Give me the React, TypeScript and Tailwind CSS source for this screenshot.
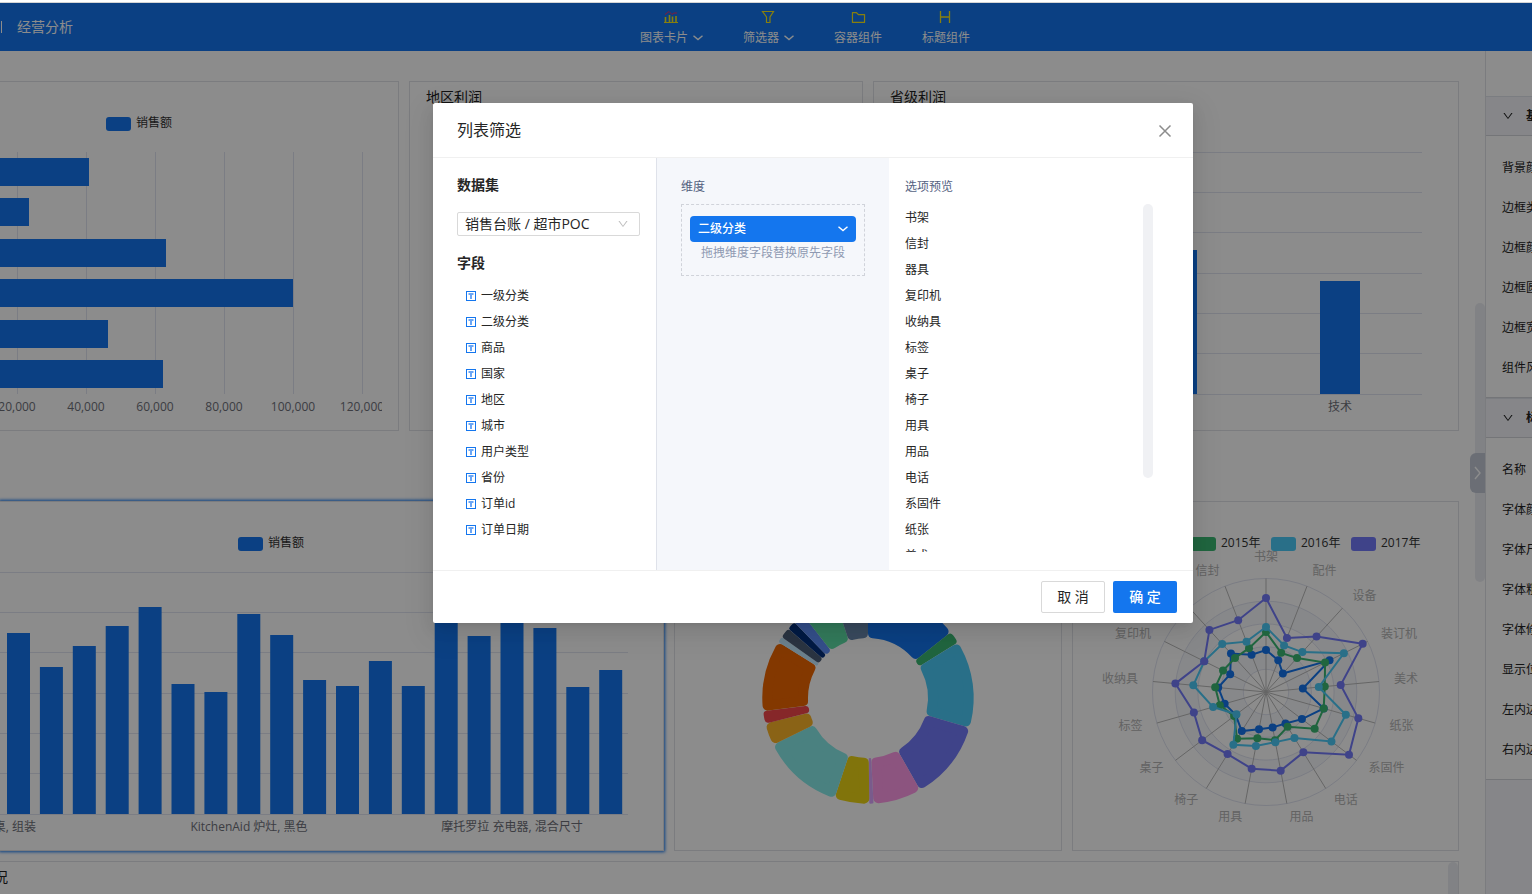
import { useState } from 'react'
import type { ReactNode } from 'react'
import clsx from 'clsx'
import { AiOutlineDown, AiOutlineFolder } from 'react-icons/ai'

const BLUE = '#1476ee'
const GRID = '#e0e3f0'

const fields = ['一级分类', '二级分类', '商品', '国家', '地区', '城市', '用户类型', '省份', '订单id', '订单日期']

const options = [
  '书架', '信封', '器具', '复印机', '收纳具', '标签', '桌子', '椅子', '用具',
  '用品', '电话', '系固件', '纸张', '美术', '装订机', '设备', '配件',
]

const sections = [
  { title: '基础', items: ['背景颜色', '边框类型', '边框颜色', '边框圆角', '边框宽度', '组件风格'] },
  { title: '标题', items: ['名称', '字体颜色', '字体尺寸', '字体粗细', '字体修饰', '显示位置', '左内边距', '右内边距'] },
]

const radarAxes = [
  '书架', '配件', '设备', '装订机', '美术', '纸张', '系固件', '电话', '用品',
  '用具', '椅子', '桌子', '标签', '收纳具', '复印机', '器具', '信封',
]

const radarSeries = [
  { name: '2014年', color: BLUE, values: [42, 34, 25, 71, 37, 60, 45, 37, 36, 38, 46, 38, 43, 48, 40, 52, 40] },
  { name: '2015年', color: '#3bb873', values: [60, 42, 46, 66, 59, 60, 61, 41, 49, 47, 55, 40, 48, 51, 48, 46, 47] },
  { name: '2016年', color: '#4bcbf8', values: [65, 50, 54, 87, 53, 83, 82, 54, 51, 55, 62, 37, 55, 73, 69, 65, 54] },
  { name: '2017年', color: '#747afa', values: [94, 58, 75, 108, 75, 96, 104, 71, 80, 78, 73, 80, 75, 91, 69, 84, 77] },
]

// end = closing angle of the slice in degrees, clockwise from the top
const slices = [
  { end: 51.5, color: BLUE },
  { end: 58.3, color: '#3bb873' },
  { end: 106.3, color: '#4bcbf8' },
  { end: 150.5, color: '#747afa' },
  { end: 177, color: '#ff99e7' },
  { end: 179.3, color: '#dca7ff' },
  { end: 198.5, color: '#ecd314' },
  { end: 243.7, color: '#87ebe9' },
  { end: 256, color: '#fbb428' },
  { end: 262.8, color: '#f5474c' },
  { end: 302, color: '#ee6600' },
  { end: 305.2, color: '#c3e9ff' },
  { end: 311, color: '#4e5f78' },
  { end: 315.8, color: '#04317d' },
  { end: 322, color: '#5f91fb' },
  { end: 341.5, color: '#5ddea7' },
  { end: 360, color: '#6987ab' },
]

const salesByRegion = [
  { y: 76, w: 89 },
  { y: 116, w: 29 },
  { y: 157, w: 166 },
  { y: 197, w: 293 },
  { y: 238, w: 108 },
  { y: 278, w: 163 },
]

const productBars = [181, 147, 168, 188, 207, 130, 122, 200, 179, 134, 128, 153, 128, 214, 178, 214, 186, 127, 144]

function polar(cx: number, cy: number, r: number, rad: number): [number, number] {
  return [cx + r * Math.sin(rad), cy - r * Math.cos(rad)]
}

function Caret() {
  return (
    <svg width="10" height="6" viewBox="0 0 10 6" fill="none" stroke="currentColor" strokeWidth="1.4" aria-hidden="true">
      <path d="M0.5 0.8 L5 4.6 L9.5 0.8" />
    </svg>
  )
}

function ChartIcon() {
  return (
    <svg width="14" height="14" viewBox="0 0 14 14" fill="none" aria-hidden="true">
      <path d="M0 12.5H14" stroke="#f7e71a" />
      <path d="M1.5 7V12M5.5 5V12M8.5 6.5V12M12 6V12" stroke="#f7e71a" strokeWidth="1.6" />
      <path d="M1 4.5L5 1.5L8 4.5L10 3H13" stroke="#ee2f68" strokeWidth="1" />
    </svg>
  )
}

function FunnelIcon() {
  return (
    <svg width="14" height="14" viewBox="0 0 14 14" fill="none" stroke="#f7e71a" strokeWidth="1.2" aria-hidden="true">
      <path d="M1.5 1.5H12.5L9 7V12.5H5.5V7Z" />
    </svg>
  )
}

function HeadingIcon() {
  return (
    <svg width="14" height="14" viewBox="0 0 14 14" fill="none" stroke="#f7e71a" strokeWidth="1.3" aria-hidden="true">
      <path d="M1.5 1V13M10.5 1V13M1.5 7H10.5" />
    </svg>
  )
}

function CloseIcon() {
  return (
    <svg width="14" height="14" viewBox="0 0 14 14" fill="none" stroke="currentColor" strokeWidth="1.5" aria-hidden="true">
      <path d="M1.5 1.5L12.5 12.5M12.5 1.5L1.5 12.5" />
    </svg>
  )
}

function FieldIcon() {
  return (
    <svg width="10" height="10" viewBox="0 0 10 10" fill="none" aria-hidden="true">
      <rect x="0.5" y="0.5" width="9" height="9" stroke="#1476ee" />
      <path d="M2.5 3H7.5" stroke="#6ba6f5" strokeWidth="2" />
      <path d="M5 3V8" stroke="#6ba6f5" strokeWidth="2" />
    </svg>
  )
}

function Card({ title, className, children }: { title?: string; className?: string; children: ReactNode }) {
  return (
    <section className={clsx('relative h-[350px] border border-[#e1e2e8] bg-white', className)}>
      {title && <h3 className="absolute left-4 h-[30px] text-sm leading-[30px] text-[#222]">{title}</h3>}
      <div className="h-full overflow-hidden">{children}</div>
    </section>
  )
}

function Legend({ x, color, label }: { x: number; color: string; label: string }) {
  return (
    <g>
      <rect x={x} y="35" width="25" height="14" rx="3" fill={color} />
      <text x={x + 30} y="45" fill="#333">{label}</text>
    </g>
  )
}

function RegionSales() {
  return (
    <svg className="h-full w-[382px]" fontSize="12">
      <Legend x={106} color={BLUE} label="销售额" />
      {[17, 86, 155, 224, 293, 362].map((x, i) => (
        <g key={x}>
          <line x1={x + 0.5} x2={x + 0.5} y1="70" y2="312" stroke={GRID} />
          <text x={x} y="329" textAnchor="middle" fill="#6e7079">{`${(i + 1) * 20},000`}</text>
        </g>
      ))}
      {salesByRegion.map((b) => (
        <rect key={b.y} x="0" y={b.y} width={b.w} height="28" fill={BLUE} />
      ))}
    </svg>
  )
}

function ProvinceProfit() {
  return (
    <svg className="h-full w-full" fontSize="12">
      {[70, 110, 150, 191, 231, 271, 312].map((y) => (
        <line key={y} x1="60" x2="548" y1={y + 0.5} y2={y + 0.5} stroke={GRID} />
      ))}
      <rect x="283" y="168" width="40" height="144" fill={BLUE} />
      <rect x="446" y="199" width="40" height="113" fill={BLUE} />
      <text x="466" y="329" textAnchor="middle" fill="#6e7079">技术</text>
    </svg>
  )
}

function ProductSales() {
  return (
    <svg className="h-full w-full" fontSize="12">
      <Legend x={238} color={BLUE} label="销售额" />
      {[70, 110, 150, 191, 231, 271, 312].map((y) => (
        <line key={y} x1="0" x2="628" y1={y + 0.5} y2={y + 0.5} stroke={GRID} />
      ))}
      {productBars.map((h, i) => (
        <rect key={i} x={7 + i * 32.9} y={312 - h} width="23" height={h} fill={BLUE} />
      ))}
      <g fill="#6e7079">
        <text x="36" y="329" textAnchor="end">书桌, 组装</text>
        <text x="249" y="329" textAnchor="middle">KitchenAid 炉灶, 黑色</text>
        <text x="512" y="329" textAnchor="middle">摩托罗拉 充电器, 混合尺寸</text>
      </g>
    </svg>
  )
}

function CategoryRing() {
  const cx = 193
  const cy = 196
  const outer = 105.7
  const inner = 60
  return (
    <svg className="h-full w-full">
      {slices.map((s, i) => {
        const from = ((i ? slices[i - 1].end : 0) * Math.PI) / 180
        const to = (s.end * Math.PI) / 180
        // inset the sector and stroke it back out, which rounds its corners
        const c = Math.min(5, Math.sin((to - from) / 2) * inner)
        const ro = outer - c
        const ri = inner + c
        const ao = Math.min(Math.asin(c / ro), (to - from) / 2)
        const ai = Math.min(Math.asin(c / ri), (to - from) / 2)
        const d = [
          'M', ...polar(cx, cy, ro, from + ao),
          'A', ro, ro, 0, 0, 1, ...polar(cx, cy, ro, to - ao),
          'L', ...polar(cx, cy, ri, to - ai),
          'A', ri, ri, 0, 0, 0, ...polar(cx, cy, ri, from + ai),
          'Z',
        ].join(' ')
        return <path key={s.end} d={d} fill={s.color} stroke={s.color} strokeWidth={c * 2} strokeLinejoin="round" />
      })}
    </svg>
  )
}

function YearRadar() {
  const cx = 193
  const cy = 190
  const r = 113.5
  const step = (Math.PI * 2) / radarAxes.length
  return (
    <svg className="h-full w-full" fontSize="12">
      {[5, 4, 3, 2, 1].map((k) => (
        <circle key={k} cx={cx} cy={cy} r={(r * k) / 5} fill={k % 2 ? '#ffffff' : '#f6f8fc'} stroke={GRID} />
      ))}
      {radarAxes.map((name, i) => {
        const [x, y] = polar(cx, cy, r, i * step)
        const [lx, ly] = polar(cx, cy, r + 15, i * step)
        const anchor = i === 0 ? 'middle' : lx > cx ? 'start' : 'end'
        return (
          <g key={name}>
            <line x1={cx} y1={cy} x2={x} y2={y} stroke="#b9b9b9" />
            <text x={lx} y={i === 0 ? ly - 3 : ly + 3} textAnchor={anchor} fill="#b4b4b4">{name}</text>
          </g>
        )
      })}
      {radarSeries.map((s, n) => {
        const points = s.values.map((v, i) => polar(cx, cy, v, i * step))
        return (
          <g key={s.name} fill={s.color}>
            <polygon points={points.map((p) => p.join(',')).join(' ')} fill="none" stroke={s.color} strokeWidth="2" />
            {points.map(([x, y], i) => <circle key={i} cx={x} cy={y} r="4" />)}
            <Legend x={38 + n * 80} color={s.color} label={s.name} />
          </g>
        )
      })}
    </svg>
  )
}

function Header() {
  const tools = [
    { label: '图表卡片', icon: <ChartIcon />, menu: true },
    { label: '筛选器', icon: <FunnelIcon />, menu: true },
    { label: '容器组件', icon: <AiOutlineFolder size={17} />, menu: false },
    { label: '标题组件', icon: <HeadingIcon />, menu: false },
  ]
  return (
    <header className="flex h-12 shrink-0 items-center bg-[#1476ee] text-white">
      <div className="flex w-[78px] shrink-0 items-center gap-[15px]">
        <span className="ml-px h-3 w-px shrink-0 bg-white" />
        <h1 className="shrink-0 text-sm">经营分析</h1>
      </div>
      <nav className="flex flex-1 justify-center gap-10">
        {tools.map((t) => (
          <button key={t.label} type="button" className="flex flex-col items-center pt-1 text-xs">
            <span className="flex h-[18px] items-center text-[#f7e71a]">{t.icon}</span>
            <span className="flex h-6 items-center gap-[5px]">
              {t.label}
              {t.menu && <Caret />}
            </span>
          </button>
        ))}
      </nav>
    </header>
  )
}

function Canvas() {
  return (
    <main className="relative flex min-w-0 flex-1 flex-col overflow-hidden bg-white pt-[30px] pr-[26px]">
      <div className="grid shrink-0 grid-cols-[399fr_454fr_586fr] gap-[10px]">
        <Card className="border-l-0"><RegionSales /></Card>
        <Card title="地区利润"><svg className="h-full w-full" /></Card>
        <Card title="省级利润"><ProvinceProfit /></Card>
      </div>
      <div className="mt-[70px] grid shrink-0 grid-cols-[664fr_388fr_387fr] gap-[10px]">
        <Card className="border-l-0 shadow-[0_0_3px_1px_#1476ee]"><ProductSales /></Card>
        <Card><CategoryRing /></Card>
        <Card><YearRadar /></Card>
      </div>
      <section className="mt-[10px] flex h-[350px] shrink-0 justify-between border border-l-0 border-[#e1e2e8]">
        <h3 className="flex w-2 justify-end overflow-hidden text-sm leading-[30px] whitespace-nowrap text-[#222]">
          <span>销售情况</span>
        </h3>
        <span className="w-[10px] rounded-full bg-[#ecedf2]" />
      </section>
      {/* page scroll thumb and the panel toggle float over the canvas */}
      <span className="absolute top-[252px] right-0 h-[279px] w-[10px] rounded-full bg-[#ecedf2]" />
      <button
        type="button"
        aria-label="收起面板"
        className="absolute top-[402px] right-0 flex h-10 w-[15px] items-center justify-center rounded-l-md bg-[#c3c9d6] text-white"
      >
        <svg width="7" height="14" viewBox="0 0 7 14" fill="none" stroke="currentColor" strokeWidth="1.4" aria-hidden="true">
          <path d="M1 1L6 7L1 13" />
        </svg>
      </button>
    </main>
  )
}

function SettingsPanel() {
  return (
    <aside className="w-[47px] shrink-0 overflow-hidden border-l border-[#e1e2e8] bg-[#f4f5fa] text-xs whitespace-nowrap text-[#222]">
      <div className="h-[45px] bg-white" />
      {sections.map((s) => (
        <section key={s.title} className="border-b border-[#d4d5da] bg-white">
          <h2 className="flex h-10 items-center gap-3 border-y border-t-[#e1e4ec] border-b-[#d4d5da] bg-[#f4f5fa] pl-4 font-bold">
            <AiOutlineDown size={12} className="shrink-0" />
            {s.title}
          </h2>
          <ul className="pt-3 pb-[9px]">
            {s.items.map((item) => (
              <li key={item} className="h-10 pl-4 leading-10">{item}</li>
            ))}
          </ul>
        </section>
      ))}
    </aside>
  )
}

function FilterDialog({ onClose }: { onClose: () => void }) {
  return (
    <div
      role="dialog"
      aria-labelledby="filter-title"
      className="flex h-[520px] w-[760px] flex-col rounded-xs bg-white text-[#262626] shadow-[0_3px_6px_-4px_rgba(0,0,0,0.12),0_6px_16px_rgba(0,0,0,0.08),0_9px_28px_8px_rgba(0,0,0,0.05)]"
    >
      <div className="flex h-[55px] shrink-0 items-center justify-between border-b border-[#f0f0f0] pr-[21px] pl-6">
        <h2 id="filter-title" className="text-base">列表筛选</h2>
        <button type="button" aria-label="关闭" onClick={onClose} className="pt-px text-[#8c8c8c]">
          <CloseIcon />
        </button>
      </div>

      <div className="flex min-h-0 flex-1">
        <div className="w-[223px] pt-4 pr-4 pl-6">
          <label htmlFor="dataset" className="block text-sm leading-[22px] font-bold">数据集</label>
          <div className="relative mt-4">
            <select
              id="dataset"
              className="block h-6 w-full appearance-none rounded-xs border border-[#d9d9d9] bg-white pr-6 pl-[7px] text-sm leading-[22px]"
            >
              <option>销售台账 / 超市POC</option>
            </select>
            <AiOutlineDown size={12} className="pointer-events-none absolute top-[6px] right-[11px] text-[#bfbfbf]" />
          </div>
          <h3 className="mt-4 text-sm leading-[22px] font-bold">字段</h3>
          <ul className="mt-[9px] pl-[9px] text-xs">
            {fields.map((f) => (
              <li key={f} className="flex h-[26px] items-center gap-[5px]">
                <FieldIcon />
                {f}
              </li>
            ))}
          </ul>
        </div>

        <div className="w-[233px] border-l border-[#dfe2ea] bg-[#f5f7fb] pt-5 pr-6 pl-6">
          <h3 className="text-xs leading-[18px] text-[#54627f]">维度</h3>
          <div className="mt-2 h-[72px] border border-dashed border-[#d0d3da] px-2 pt-[11px]">
            <button
              type="button"
              className="flex h-[26px] w-full items-center justify-between rounded bg-[#1476ee] px-2 text-xs font-medium text-white"
            >
              二级分类
              <Caret />
            </button>
            <p className="text-center text-xs leading-[22px] text-[#8f9ab2]">拖拽维度字段替换原先字段</p>
          </div>
        </div>

        <div className="flex-1 pt-5 pr-10 pl-4">
          <h3 className="text-xs leading-[18px] text-[#54627f]">选项预览</h3>
          <div className="mt-2 flex h-[348px] justify-between overflow-hidden">
            <ul className="pt-px text-xs leading-[26px]">
              {options.map((o) => <li key={o}>{o}</li>)}
            </ul>
            <span className="h-[274px] w-[10px] rounded-full bg-[#f0f1f4]" />
          </div>
        </div>
      </div>

      <div className="flex h-[53px] shrink-0 items-center justify-end gap-2 border-t border-[#f0f0f0] px-4 text-sm">
        <button type="button" onClick={onClose} className="h-8 w-16 rounded-xs border border-[#d9d9d9] bg-white">
          取 消
        </button>
        <button type="button" onClick={onClose} className="h-8 w-16 rounded-xs bg-[#1476ee] font-medium text-white">
          确 定
        </button>
      </div>
    </div>
  )
}

export default function App() {
  const [open, setOpen] = useState(true)

  return (
    <div className="flex h-screen flex-col overflow-hidden bg-white font-['Open_Sans','Noto_Sans_CJK_SC',sans-serif]">
      <div className="h-[3px] shrink-0 border-b border-[#d5d5d5]" />
      <div className="relative flex min-h-0 flex-1 flex-col">
        <Header />
        <div className="flex min-h-0 flex-1">
          <Canvas />
          <SettingsPanel />
        </div>
        {open && (
          <div className="absolute inset-0 flex items-start justify-center bg-black/45 pt-[100px] pl-[94px]">
            <FilterDialog onClose={() => setOpen(false)} />
          </div>
        )}
      </div>
    </div>
  )
}
